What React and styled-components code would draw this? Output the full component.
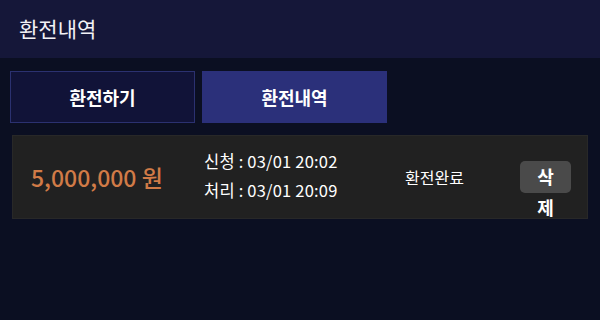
import React from "react";
import styled, { createGlobalStyle } from "styled-components";

const Global = createGlobalStyle`
  html, body { margin: 0; padding: 0; background: #0b0f22; }
  body { font-family: "Noto Sans CJK KR", "Noto Sans", sans-serif; color: #fff; }
  * { box-sizing: border-box; }
`;

const Page = styled.div`
  width: 600px;
  height: 320px;
  background: #0b0f22;
  overflow: hidden;
`;

const Header = styled.header`
  height: 58px;
  background: #151739;
  display: flex;
  align-items: center;
  padding: 0 0 2px 19px;
`;

const Title = styled.h1`
  margin: 0;
  font-size: 21px;
  font-weight: 400;
  color: #f2f2f6;
`;

const Tabs = styled.nav`
  display: flex;
  gap: 7px;
  padding: 13px 0 0 10px;
`;

const Tab = styled.button`
  width: 185px;
  height: 52px;
  border: 1px solid ${(p) => (p.$active ? "#2b307a" : "#2b3170")};
  background: ${(p) => (p.$active ? "#2b307a" : "#111338")};
  color: #fff;
  font-family: inherit;
  font-size: 18px;
  font-weight: 700;
  padding: 0;
  cursor: pointer;
`;

const Card = styled.div`
  margin: 12px 12px 0 12px;
  height: 84px;
  background: #212121;
  border: 1px solid #282828;
  display: grid;
  grid-template-columns: 173px 201px 115px 51px;
  align-items: center;
  padding-left: 18px;
`;

const Amount = styled.div`
  color: #d17b47;
  font-size: 23px;
  font-weight: 500;
  white-space: nowrap;
`;

const Dates = styled.div`
  display: flex;
  flex-direction: column;
  gap: 7px;
  margin-top: -3px;
  font-size: 16.5px;
  font-weight: 400;
  line-height: 22px;
  letter-spacing: 0.2px;
  white-space: nowrap;
`;

const Status = styled.div`
  font-size: 16px;
  font-weight: 400;
`;

const DeleteButton = styled.button`
  align-self: start;
  margin-top: 25px;
  width: 51px;
  height: 32px;
  padding: 0 10px;
  border: none;
  border-radius: 5px;
  background: #4a4a4a;
  color: #fff;
  font-family: inherit;
  font-size: 18px;
  font-weight: 700;
  line-height: 31px;
  word-break: break-all;
  overflow: visible;
  cursor: pointer;
`;

export default function App() {
  return (
    <Page>
      <Global />
      <Header>
        <Title>환전내역</Title>
      </Header>
      <Tabs>
        <Tab>환전하기</Tab>
        <Tab $active>환전내역</Tab>
      </Tabs>
      <Card>
        <Amount>5,000,000 원</Amount>
        <Dates>
          <span>신청 : 03/01 20:02</span>
          <span>처리 : 03/01 20:09</span>
        </Dates>
        <Status>환전완료</Status>
        <DeleteButton>삭제</DeleteButton>
      </Card>
    </Page>
  );
}
